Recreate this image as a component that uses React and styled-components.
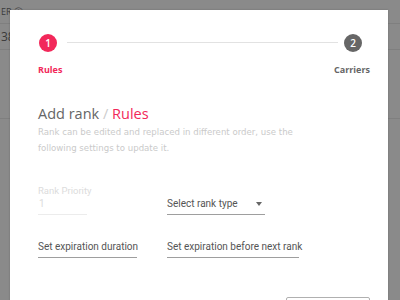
import React from 'react';
import styled, { createGlobalStyle } from 'styled-components';

const GlobalStyle = createGlobalStyle`
  html, body {
    margin: 0;
    padding: 0;
    width: 400px;
    height: 300px;
    overflow: hidden;
    background: #8a8a8a;
    font-family: "Open Sans", sans-serif;
  }
`;

const Backdrop = styled.div`
  position: relative;
  width: 400px;
  height: 300px;
  overflow: hidden;
  background: #8a8a8a;
`;

const PageBehind = styled.div`
  display: flex;
  flex-direction: column;
  font-family: "Open Sans", sans-serif;
`;

const BehindRow = styled.div`
  height: ${(p) => p.h}px;
  border-bottom: 1px solid #7f7f7f;
  display: flex;
  align-items: center;
  line-height: 1;
  white-space: nowrap;
  padding-left: 1px;
  font-size: ${(p) => p.fs || 12}px;
  color: #3a3a3a;
`;

const Modal = styled.div`
  position: absolute;
  left: 10px;
  top: 10px;
  width: 378px;
  height: 320px;
  background: #fff;
  box-shadow: 0 0 2px rgba(0, 0, 0, 0.2);
  padding: 24px 18px 0 28px;
  box-sizing: border-box;
`;

const Stepper = styled.div`
  display: flex;
  align-items: flex-start;
  justify-content: ${(p) => (p.spread ? 'space-between' : 'flex-start')};
`;

const Circle = styled.div`
  flex: none;
  width: 18px;
  height: 18px;
  border-radius: 50%;
  background: ${(p) => (p.active ? '#f2285a' : '#666')};
  color: #fff;
  font-size: 10px;
  font-weight: 600;
  display: flex;
  align-items: center;
  justify-content: center;
  margin: 0 ${(p) => (p.end ? '8px' : '0')} 0 ${(p) => (p.end ? '0' : '1px')};
`;

const StepLabel = styled.div`
  margin-top: 11px;
  font-size: 9px;
  font-weight: 700;
  color: ${(p) => (p.active ? '#f2285a' : '#666')};
`;

const Connector = styled.div`
  flex: 1;
  height: 1px;
  background: #e2e2e2;
  margin: 8px 6px 0 10px;
`;

const Title = styled.h2`
  margin: 27px 0 0;
  font-size: 14.5px;
  font-weight: 400;
  color: #666;
  line-height: 22px;
`;

const Slash = styled.span`
  color: #ccc;
`;

const Pink = styled.span`
  color: #f2285a;
`;

const Description = styled.p`
  margin: -1px 0 0;
  width: 262px;
  font-family: "DejaVu Sans", sans-serif;
  font-size: 8.6px;
  line-height: 16px;
  color: #cacaca;
`;

const FormGrid = styled.div`
  display: grid;
  grid-template-columns: 129px 140px;
  row-gap: 25px;
  margin-top: 29px;
  align-items: end;
`;

const Field = styled.div`
  width: ${(p) => p.w}px;
  border-bottom: 1px solid ${(p) => (p.disabled ? '#ececec' : '#9e9e9e')};
  font-family: Roboto, sans-serif;
  padding-bottom: 3px;
  position: relative;
`;

const FieldLabel = styled.div`
  font-size: 9.5px;
  color: #dcdcdc;
  margin-bottom: 1px;
  white-space: nowrap;
`;

const FieldValue = styled.div`
  font-size: 10px;
  color: ${(p) => (p.disabled ? '#dcdcdc' : '#555')};
  line-height: 14px;
  white-space: nowrap;
  padding-left: ${(p) => (p.disabled ? '1px' : '0')};
`;

const Arrow = styled.span`
  position: absolute;
  right: 3px;
  top: 5px;
  width: 0;
  height: 0;
  border-left: 3px solid transparent;
  border-right: 3px solid transparent;
  border-top: 4px solid #666;
`;

const Footer = styled.div`
  display: flex;
  justify-content: flex-end;
  margin-top: 39px;
`;

const OutlineButton = styled.div`
  width: 82px;
  height: 30px;
  border: 1px solid #b0b0b0;
  border-radius: 2px;
`;

export default function App() {
  return (
    <>
      <GlobalStyle />
      <Backdrop>
        <PageBehind>
          <BehindRow h={23} fs={9}>ER ⓘ</BehindRow>
          <BehindRow h={25} fs={12}>38</BehindRow>
          <BehindRow h={68} />
        </PageBehind>
        <Modal>
          <Stepper>
            <Circle active>1</Circle>
            <Connector />
            <Circle end>2</Circle>
          </Stepper>
          <Stepper spread>
            <StepLabel active>Rules</StepLabel>
            <StepLabel>Carriers</StepLabel>
          </Stepper>
          <Title>
            Add rank <Slash>/</Slash> <Pink>Rules</Pink>
          </Title>
          <Description>
            Rank can be edited and replaced in different order, use the following settings to update it.
          </Description>
          <FormGrid>
            <Field w={49} disabled>
              <FieldLabel>Rank Priority</FieldLabel>
              <FieldValue disabled>1</FieldValue>
            </Field>
            <Field w={98}>
              <FieldValue>Select rank type</FieldValue>
              <Arrow />
            </Field>
            <Field w={99}>
              <FieldValue>Set expiration duration</FieldValue>
            </Field>
            <Field w={132}>
              <FieldValue>Set expiration before next rank</FieldValue>
            </Field>
          </FormGrid>
          <Footer>
            <OutlineButton />
          </Footer>
        </Modal>
      </Backdrop>
    </>
  );
}
